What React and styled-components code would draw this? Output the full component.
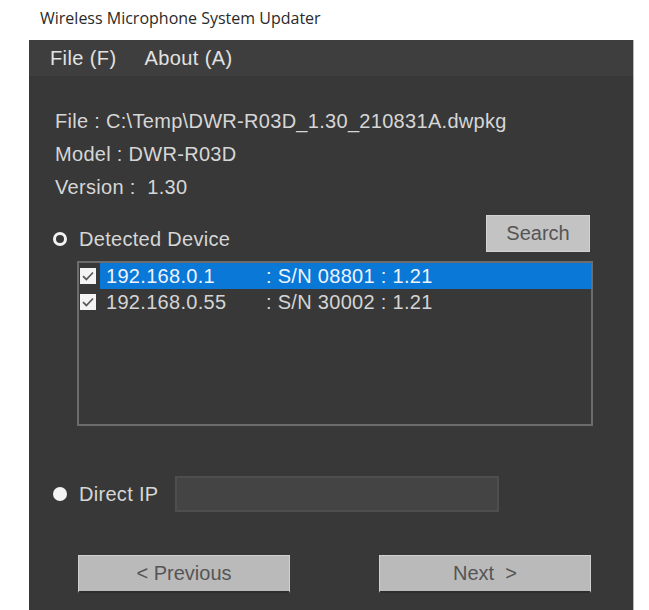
import React from "react";
import styled, { createGlobalStyle } from "styled-components";

const GlobalStyle = createGlobalStyle`
	html, body {
		margin: 0;
		padding: 0;
		background: #ffffff;
		overflow: hidden;
	}
	body {
		font-family: "Liberation Sans", Arial, sans-serif;
	}
`;

const devices = [
	{ ip: "192.168.0.1", sn: "08801", ver: "1.21", selected: true },
	{ ip: "192.168.0.55", sn: "30002", ver: "1.21", selected: false },
];

function CheckMark() {
	return (
		<svg width="16" height="16" viewBox="0 0 16 16">
			<rect x="0" y="0" width="16" height="16" fill="#f4f4f4" />
			<path d="M3 8.2 L6.4 11.5 L13 4.5" stroke="#5a5a5a" strokeWidth="1.8" fill="none" />
		</svg>
	);
}

function App() {
	return (
		<Page>
			<GlobalStyle />
			<TitleText>Wireless Microphone System Updater</TitleText>
			<Window>
				<MenuBar>
					<MenuItem>File (F)</MenuItem>
					<MenuItem>About (A)</MenuItem>
				</MenuBar>
				<Content>
					<Info>
						<div>File : C:\Temp\DWR-R03D_1.30_210831A.dwpkg</div>
						<div>Model : DWR-R03D</div>
						<div>Version :&nbsp; 1.30</div>
					</Info>

					<DetectedRow>
						<RadioLabel>
							<Radio />
							Detected Device
						</RadioLabel>
						<SearchButton>Search</SearchButton>
					</DetectedRow>

					<ListBox>
						{devices.map((d) => (
							<DeviceRow key={d.ip}>
								<CheckBox>
									<CheckMark />
								</CheckBox>
								<DeviceText selected={d.selected}>
									<IpCol>{d.ip}</IpCol>
									<span>
										: S/N {d.sn} : {d.ver}
									</span>
								</DeviceText>
							</DeviceRow>
						))}
					</ListBox>

					<DirectRow>
						<DirectLabel>
							<Radio filled />
							Direct IP
						</DirectLabel>
						<IpInput />
					</DirectRow>

					<ButtonRow>
						<NavButton>&lt; Previous</NavButton>
						<NavButton>Next&nbsp; &gt;</NavButton>
					</ButtonRow>
				</Content>
			</Window>
		</Page>
	);
}

export default App;

const Page = styled.div`
	width: 649px;
	height: 610px;
	display: flex;
	flex-direction: column;
	overflow: hidden;
`;

const TitleText = styled.div`
	height: 40px;
	padding-left: 40px;
	box-sizing: border-box;
	font-family: "Open Sans", "Liberation Sans", sans-serif;
	font-size: 16px;
	line-height: 36px;
	color: #2a2a2a;
	flex-shrink: 0;
`;

const Window = styled.div`
	margin-left: 29px;
	width: 605px;
	flex: 1;
	background: #383838;
	border-right: 1px solid #b8b8b8;
	box-sizing: border-box;
	display: flex;
	flex-direction: column;
`;

const MenuBar = styled.div`
	height: 36px;
	background: #3e3e3e;
	display: flex;
	align-items: center;
	gap: 28px;
	padding-left: 21px;
	flex-shrink: 0;
`;

const MenuItem = styled.span`
	font-size: 20px;
	letter-spacing: 0.4px;
	color: #e2e2e2;
`;

const Content = styled.div`
	padding: 29px 40px 0 24px;
	display: flex;
	flex-direction: column;
	font-size: 20px;
	letter-spacing: 0.3px;
	color: #d6d6d6;
`;

const Info = styled.div`
	padding-left: 2px;
	line-height: 33px;
`;

const DetectedRow = styled.div`
	margin-top: 11px;
	display: flex;
	justify-content: space-between;
	align-items: flex-start;
`;

const RadioLabel = styled.label`
	margin-top: 13px;
	display: flex;
	align-items: center;
	gap: 12px;
	line-height: 22px;
`;

const Radio = styled.span`
	width: 14px;
	height: 14px;
	border-radius: 50%;
	box-sizing: border-box;
	border: ${(p) => (p.filled ? "none" : "3px solid #f2f2f2")};
	background: ${(p) => (p.filled ? "#f4f4f4" : "transparent")};
	flex-shrink: 0;
`;

const SearchButton = styled.button`
	width: 104px;
	height: 37px;
	margin-right: 3px;
	background: #c3c3c3;
	border: 1px solid #d2d2d2;
	font-family: "Liberation Sans", Arial, sans-serif;
	font-size: 20px;
	color: #555555;
	padding: 0;
`;

const ListBox = styled.div`
	margin: 9px 0 0 24px;
	height: 165px;
	border: 2px solid #6c6c6c;
	box-sizing: border-box;
	display: flex;
	flex-direction: column;
`;

const DeviceRow = styled.div`
	height: 26px;
	display: flex;
	align-items: center;
`;

const CheckBox = styled.span`
	width: 16px;
	height: 16px;
	margin: 0 4px 0 1px;
	display: flex;
`;

const DeviceText = styled.div`
	flex: 1;
	height: 100%;
	display: flex;
	align-items: center;
	padding-left: 6px;
	background: ${(p) => (p.selected ? "#0a78d7" : "transparent")};
	color: ${(p) => (p.selected ? "#eef4ff" : "#d4d4d4")};
`;

const IpCol = styled.span`
	width: 160px;
`;

const DirectRow = styled.div`
	margin-top: 50px;
	display: flex;
	align-items: center;
`;

const DirectLabel = styled(RadioLabel)`
	margin-top: 0;
	width: 122px;
`;

const IpInput = styled.div`
	width: 324px;
	height: 36px;
	box-sizing: border-box;
	background: #444444;
	border: 2px solid #4e4e4e;
`;

const ButtonRow = styled.div`
	margin-top: 43px;
	padding: 0 2px 0 25px;
	display: flex;
	justify-content: space-between;
`;

const NavButton = styled.button`
	width: 212px;
	height: 38px;
	background: #bababa;
	border: 1px solid #d0d0d0;
	border-bottom: 2px solid #2e2e2e;
	font-family: "Liberation Sans", Arial, sans-serif;
	font-size: 20px;
	color: #555555;
	padding: 0;
`;
